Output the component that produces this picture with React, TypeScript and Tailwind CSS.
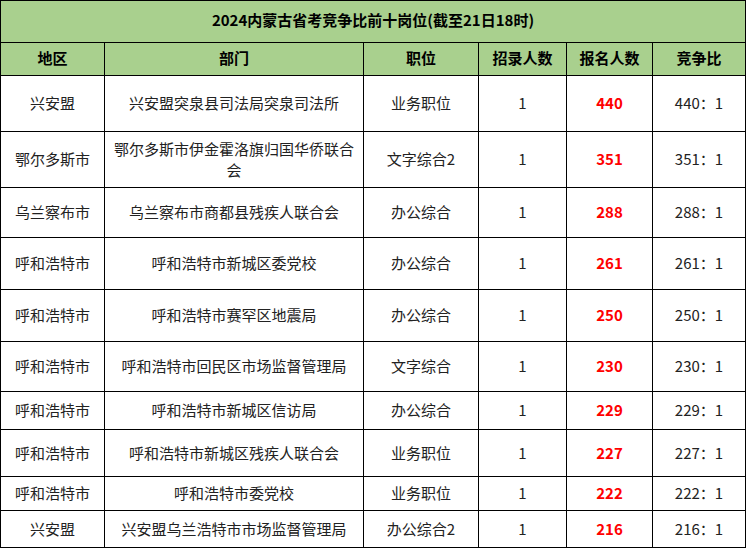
const rows = [
  { area: "兴安盟", dept: "兴安盟突泉县司法局突泉司法所", pos: "业务职位", n: 440, h: "h-[55px]" },
  { area: "鄂尔多斯市", dept: "鄂尔多斯市伊金霍洛旗归国华侨联合会", pos: "文字综合2", n: 351, h: "h-[55px]" },
  { area: "乌兰察布市", dept: "乌兰察布市商都县残疾人联合会", pos: "办公综合", n: 288, h: "h-[49px]" },
  { area: "呼和浩特市", dept: "呼和浩特市新城区委党校", pos: "办公综合", n: 261, h: "h-[51px]" },
  { area: "呼和浩特市", dept: "呼和浩特市赛罕区地震局", pos: "办公综合", n: 250, h: "h-[51px]" },
  { area: "呼和浩特市", dept: "呼和浩特市回民区市场监督管理局", pos: "文字综合", n: 230, h: "h-[49px]" },
  { area: "呼和浩特市", dept: "呼和浩特市新城区信访局", pos: "办公综合", n: 229, h: "h-[37px]" },
  { area: "呼和浩特市", dept: "呼和浩特市新城区残疾人联合会", pos: "业务职位", n: 227, h: "h-[46px]" },
  { area: "呼和浩特市", dept: "呼和浩特市委党校", pos: "业务职位", n: 222, h: "h-[33px]" },
  { area: "兴安盟", dept: "兴安盟乌兰浩特市市场监督管理局", pos: "办公综合2", n: 216, h: "h-[36px]" },
];

const headers = ["地区", "部门", "职位", "招录人数", "报名人数", "竞争比"];

const cell = "bg-white flex items-center justify-center text-center px-2 pb-[2px] leading-[21px]";

export default function App() {
  return (
    <div className="w-[746px] h-[549px] bg-white font-['Noto_Sans_CJK_SC','Noto_Sans',sans-serif] text-[15px] text-[#222]">
      <div className="grid grid-cols-[103px_258px_114px_87px_85px_92px] gap-px bg-black p-px w-[746px]">
        <div className="col-span-6 h-[41px] bg-[#a9d08e] flex items-center justify-center pb-[2px] font-bold text-black">
          2024内蒙古省考竞争比前十岗位(截至21日18时)
        </div>
        {headers.map((h) => (
          <div key={h} className="h-[32px] bg-[#a9d08e] flex items-center justify-center pb-[2px] font-bold text-black">
            {h}
          </div>
        ))}
        {rows.map((r, i) => (
          <div key={i} className="contents">
            <div className={`${cell} ${r.h}`}>{r.area}</div>
            <div className={`${cell} ${r.h}`}>{r.dept}</div>
            <div className={`${cell} ${r.h}`}>{r.pos}</div>
            <div className={`${cell} ${r.h}`}>1</div>
            <div className={`${cell} ${r.h} font-bold text-[#ff0000]`}>{r.n}</div>
            <div className={`${cell} ${r.h}`}>{r.n}：1</div>
          </div>
        ))}
      </div>
    </div>
  );
}
